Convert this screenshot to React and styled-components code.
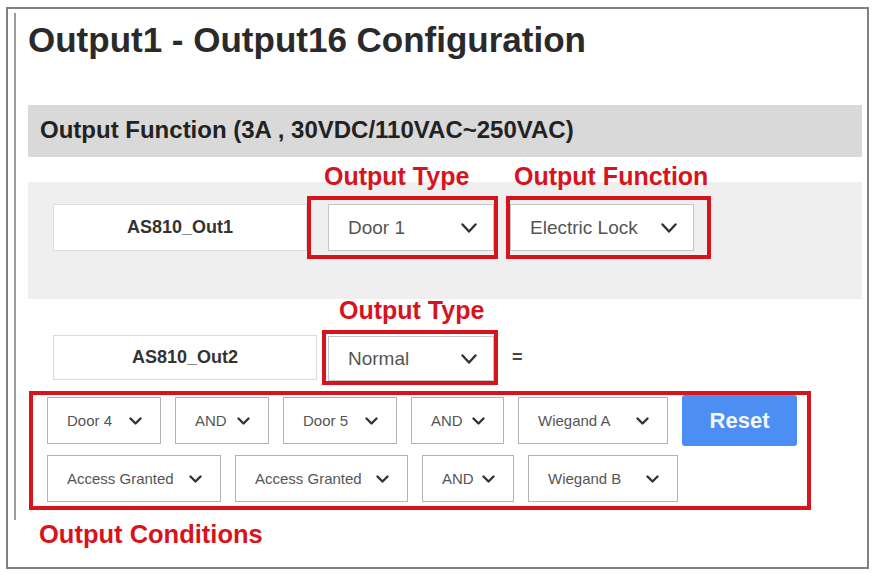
import React from 'react';
import styled, { createGlobalStyle } from 'styled-components';

const GlobalStyle = createGlobalStyle`
  body {
    margin: 0;
    background: #ffffff;
    font-family: 'Liberation Sans', Arial, sans-serif;
  }
`;

const conditionRows = [
  [['Door 4', 114], ['AND', 94], ['Door 5', 114], ['AND', 93], ['Wiegand A', 150]],
  [['Access Granted', 174], ['Access Granted', 173], ['AND', 92], ['Wiegand B', 150]],
];

function Chevron({ small }) {
  const w = small ? 13 : 16;
  const h = small ? 8 : 10;
  return (
    <svg width={w} height={h} viewBox={`0 0 ${w} ${h}`} fill="none">
      <polyline
        points={`1.5,1.5 ${w / 2},${h - 1.5} ${w - 1.5},1.5`}
        stroke="#333"
        strokeWidth="2.4"
        strokeLinecap="round"
        strokeLinejoin="round"
      />
    </svg>
  );
}

function Dropdown({ label, width, height, small }) {
  return (
    <Select $w={width} $h={height} $small={small}>
      <span>{label}</span>
      <Chevron small={small} />
    </Select>
  );
}

function App() {
  return (
    <>
      <GlobalStyle />
      <Frame>
        <Column>
          <Title>Output1 - Output16 Configuration</Title>
          <SectionBar>Output Function (3A , 30VDC/110VAC~250VAC)</SectionBar>
          <Band>
            <FieldRow>
              <NameBox $w={254}>AS810_Out1</NameBox>
              <Highlight $pad="4px 0 4px 17px">
                <Tag $left={13}>Output Type</Tag>
                <Dropdown label="Door 1" width={166} />
              </Highlight>
              <Highlight $pad="4px 13px 4px 0">
                <Tag $left={4}>Output Function</Tag>
                <Dropdown label="Electric Lock" width={184} />
              </Highlight>
            </FieldRow>
          </Band>
          <SecondRow>
            <NameBox $w={264} $h={45}>AS810_Out2</NameBox>
            <Highlight $pad="2px 0 0 2px">
              <Tag $left={13}>Output Type</Tag>
              <Dropdown label="Normal" width={166} height={45} />
            </Highlight>
            <Equals>=</Equals>
          </SecondRow>
          <Conditions>
            {conditionRows.map((row, i) => (
              <CondRow key={i}>
                {row.map(([label, w], j) => (
                  <Dropdown key={j} label={label} width={w} small />
                ))}
                {i === 0 && <ResetButton>Reset</ResetButton>}
              </CondRow>
            ))}
          </Conditions>
        </Column>
        <Caption>Output Conditions</Caption>
      </Frame>
    </>
  );
}

export default App;

const Frame = styled.div`
  box-sizing: border-box;
  width: 863px;
  height: 562px;
  margin: 7px 0 0 6px;
  border: 2px solid #808080;
`;

const Column = styled.div`
  margin: 4px 0 0 6px;
  padding: 7px 5px 10px 12px;
  border-left: 2px solid #9c9c9c;
`;

const Title = styled.h1`
  margin: 0;
  font-size: 35px;
  line-height: 40px;
  font-weight: 700;
  color: #2a2a2a;
`;

const SectionBar = styled.div`
  box-sizing: border-box;
  height: 52px;
  margin-top: 45px;
  padding: 0 0 3px 12px;
  display: flex;
  align-items: center;
  background: #d9d9d9;
  font-size: 24px;
  font-weight: 700;
  color: #222;
`;

const Band = styled.div`
  box-sizing: border-box;
  height: 117px;
  margin-top: 25px;
  padding: 14px 0 0 25px;
  background: #efefef;
`;

const FieldRow = styled.div`
  display: flex;
  align-items: center;
  gap: 8px;

  & > :first-child {
    margin-right: -8px;
  }
`;

const SecondRow = styled.div`
  display: flex;
  align-items: center;
  gap: 5px;
  margin-top: 31px;
  padding-left: 25px;
`;

const NameBox = styled.div`
  box-sizing: border-box;
  width: ${(p) => p.$w}px;
  height: ${(p) => p.$h || 47}px;
  display: flex;
  align-items: center;
  justify-content: center;
  background: #ffffff;
  border: 1px solid #dcdcdc;
  font-size: 18px;
  font-weight: 700;
  color: #333;
`;

const Highlight = styled.div`
  position: relative;
  display: flex;
  padding: ${(p) => p.$pad};
  border: 4px solid #d7141d;
`;

const Tag = styled.span`
  position: absolute;
  left: ${(p) => p.$left}px;
  bottom: calc(100% + 10px);
  font-size: 25px;
  line-height: 28px;
  font-weight: 700;
  color: #d7141d;
  white-space: nowrap;
`;

const Select = styled.div`
  box-sizing: border-box;
  width: ${(p) => p.$w}px;
  height: ${(p) => p.$h || 47}px;
  display: flex;
  align-items: center;
  justify-content: space-between;
  padding: ${(p) => (p.$small ? '0 18px 0 19px' : '0 16px 0 19px')};
  background: #ffffff;
  border: 1px solid ${(p) => (p.$small ? '#b3b3b3' : '#c4c4c4')};
  font-size: ${(p) => (p.$small ? 15 : 19)}px;
  color: #555;
  white-space: nowrap;
`;

const Equals = styled.span`
  margin-left: 9px;
  font-size: 18px;
  font-weight: 700;
  color: #444;
`;

const Conditions = styled.div`
  width: 782px;
  box-sizing: border-box;
  margin: 6px 0 0 1px;
  padding: 0 10px 4px 14px;
  border: 4px solid #d7141d;
  display: flex;
  flex-direction: column;
  gap: 9px;
`;

const CondRow = styled.div`
  display: flex;
  align-items: center;
  gap: 14px;
`;

const ResetButton = styled.button`
  width: 115px;
  height: 51px;
  border: none;
  border-radius: 3px;
  background: #4d8ef2;
  color: #f4f7ff;
  font-family: 'Liberation Sans', Arial, sans-serif;
  font-size: 22px;
  font-weight: 700;
`;

const Caption = styled.div`
  margin: 0 0 0 31px;
  font-size: 25.5px;
  line-height: 28px;
  font-weight: 700;
  color: #d7141d;
`;
